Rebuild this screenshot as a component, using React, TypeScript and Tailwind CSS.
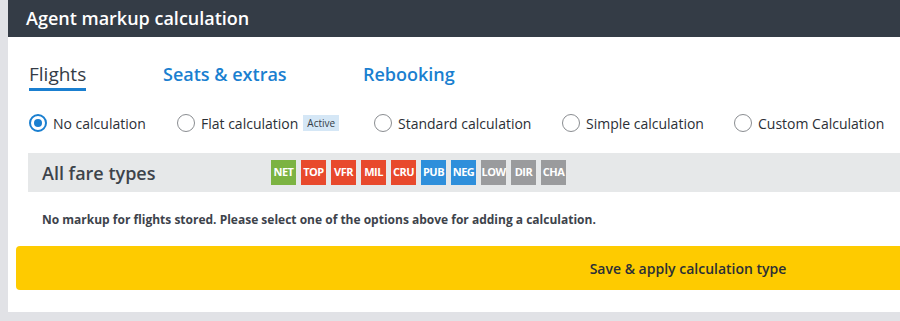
import React from 'react';

const fareTypes = [
  { code: 'NET', color: 'bg-[#7cb342]' },
  { code: 'TOP', color: 'bg-[#e8492c]' },
  { code: 'VFR', color: 'bg-[#e8492c]' },
  { code: 'MIL', color: 'bg-[#e8492c]' },
  { code: 'CRU', color: 'bg-[#e8492c]' },
  { code: 'PUB', color: 'bg-[#2e8fdb]' },
  { code: 'NEG', color: 'bg-[#2e8fdb]' },
  { code: 'LOW', color: 'bg-[#9a9b9d]' },
  { code: 'DIR', color: 'bg-[#9a9b9d]' },
  { code: 'CHA', color: 'bg-[#9a9b9d]' },
];

const options = [
  { label: 'No calculation', checked: true, width: 'w-[148px]' },
  { label: 'Flat calculation', active: true, width: 'w-[197px]' },
  { label: 'Standard calculation', width: 'w-[188px]' },
  { label: 'Simple calculation', width: 'w-[172px]' },
  { label: 'Custom Calculation', width: 'w-[160px]' },
];

const Radio = ({ checked }: { checked?: boolean }) => (
  <span
    className={
      checked
        ? 'w-[18px] h-[18px] rounded-full border-2 border-[#1a7fd0] flex items-center justify-center shrink-0'
        : 'w-[18px] h-[18px] rounded-full border border-[#8a8d91] shrink-0'
    }
  >
    {checked && <span className="w-[8px] h-[8px] rounded-full bg-[#1a7fd0]" />}
  </span>
);

export default function App() {
  return (
    <div
      className="w-[900px] h-[321px] overflow-hidden bg-[#e1e2e6] pl-2"
      style={{ fontFamily: '"Open Sans", "Noto Sans", sans-serif' }}
    >
      <div className="w-[1400px]">
        {/* Header */}
        <div className="h-[37px] bg-[#343c46] flex items-center pl-[18px]">
          <h1 className="text-white text-[18px] font-semibold">Agent markup calculation</h1>
        </div>

        {/* Body */}
        <div className="bg-white h-[275px] pt-[24px]">
          {/* Tabs */}
          <div className="flex pl-[21px] h-[31px]">
            <div className="w-[134px]">
              <div className="inline-block border-b-[3px] border-[#1a7fd0] pb-[1px]">
                <span className="text-[19px] leading-[26px] text-[#343c46]">Flights</span>
              </div>
            </div>
            <div className="w-[200px] text-[18px] leading-[26px] text-[#1a7fd0] font-semibold">Seats &amp; extras</div>
            <div className="text-[18px] leading-[26px] text-[#1a7fd0] font-semibold">Rebooking</div>
          </div>

          {/* Radios */}
          <div className="flex pl-[21px] mt-[21px] h-[20px] items-center">
            {options.map((o) => (
              <div key={o.label} className={`flex items-center gap-[6px] ${o.width}`}>
                <Radio checked={o.checked} />
                <span className="text-[14px] text-[#2b2f36]">{o.label}</span>
                {o.active && (
                  <span className="bg-[#d5e7f6] text-[#343c46] text-[10px] px-[4px] leading-[16px] -ml-[1px]">Active</span>
                )}
              </div>
            ))}
          </div>

          {/* Fare types bar */}
          <div className="ml-[20px] mt-[20px] h-[39px] bg-[#e6e8e9] flex items-center pl-[14px]">
            <span className="w-[229px] text-[18px] text-[#3d434b] font-semibold leading-none">All fare types</span>
            <div className="flex gap-[5px]">
              {fareTypes.map((f) => (
                <span
                  key={f.code}
                  className={`${f.color} w-[25px] h-[25px] flex items-center justify-center text-white text-[11px] font-bold tracking-[-0.5px]`}
                >
                  {f.code}
                </span>
              ))}
            </div>
          </div>

          {/* Message */}
          <p className="pl-[34px] mt-[20px] text-[12px] font-bold text-[#3d434b] leading-[16px]">
            No markup for flights stored. Please select one of the options above for adding a calculation.
          </p>

          {/* Save button */}
          <button className="ml-[8px] mt-[18px] w-[1344px] h-[44px] bg-[#fecb00] rounded-[4px] text-[14px] font-semibold text-[#2b2f36] flex items-center justify-center">
            Save &amp; apply calculation type
          </button>
        </div>
      </div>
    </div>
  );
}
